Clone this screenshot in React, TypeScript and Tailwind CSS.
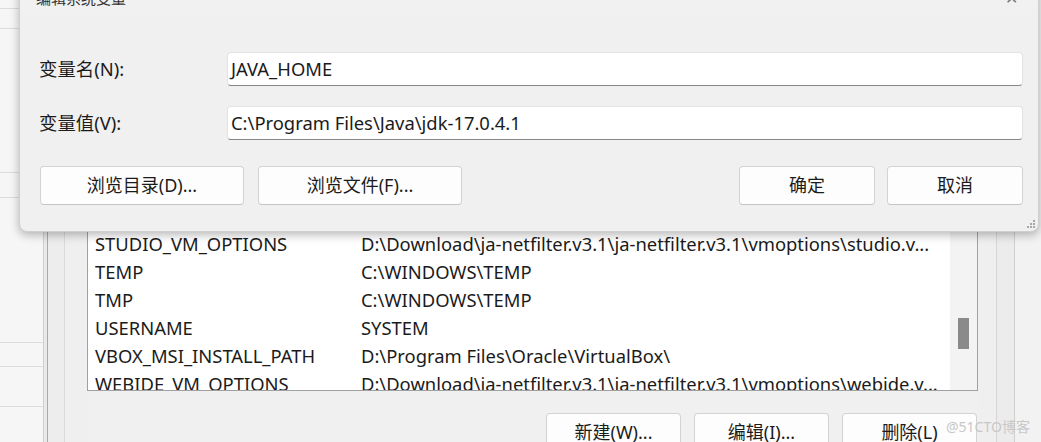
const rows: [string, string][] = [
  ['STUDIO_VM_OPTIONS', 'D:\\Download\\ja-netfilter.v3.1\\ja-netfilter.v3.1\\vmoptions\\studio.v...'],
  ['TEMP', 'C:\\WINDOWS\\TEMP'],
  ['TMP', 'C:\\WINDOWS\\TEMP'],
  ['USERNAME', 'SYSTEM'],
  ['VBOX_MSI_INSTALL_PATH', 'D:\\Program Files\\Oracle\\VirtualBox\\'],
  ['WEBIDE_VM_OPTIONS', 'D:\\Download\\ja-netfilter.v3.1\\ja-netfilter.v3.1\\vmoptions\\webide.v...'],
]

function WinButton({ label, className }: { label: string; className: string }) {
  return (
    <div
      className={`flex h-[39px] shrink-0 items-center justify-center rounded-[4px] border border-[#d3d3d3] border-b-[#c4c4c4] bg-[#fdfdfd] text-[18px] text-[#1b1b1b] ${className}`}
    >
      {label}
    </div>
  )
}

export default function App() {
  return (
    <div className="relative h-[442px] w-[1041px] overflow-hidden bg-[#f0f0f0] font-['Noto_Sans','Noto_Sans_CJK_SC',sans-serif] text-[#1b1b1b]">
      {/* parent window behind */}
      <div className="flex h-full">
        <div className="flex w-[43px] shrink-0 flex-col bg-[#f6f6f6]">
          <div className="h-[9px] border-b border-[#dcdcdc]" />
          <div className="h-[20px] border-b border-[#dcdcdc]" />
          <div className="h-[144px] border-b border-[#dcdcdc]" />
          <div className="h-[25px] border-b border-[#dcdcdc]" />
          <div className="h-[145px] border-b border-[#dcdcdc]" />
          <div className="h-[24px] border-b border-[#dcdcdc]" />
          <div className="h-[40px] border-b border-[#dcdcdc]" />
        </div>
        <div className="w-[5px] shrink-0 border-l border-r border-l-[#cfcfcf] border-r-[#a9a9a9] bg-[#e9e9e9]" />
        <div className="flex w-[39px] shrink-0">
          <div className="w-[17px] border-r border-[#dadada] bg-[#ededed]" />
          <div className="flex-1 bg-[#efefef]" />
        </div>

        <div className="flex w-[891px] shrink-0 flex-col">
          <div className="flex h-[391px] border border-[#a0a0a0] bg-white">
            <div className="flex-1 overflow-hidden pl-[7px] pt-[229px] text-[18.4px]">
              {rows.map(([name, value]) => (
                <div key={name} className="flex h-[28px] items-center whitespace-nowrap">
                  <div className="w-[266px] shrink-0">{name}</div>
                  <div>{value}</div>
                </div>
              ))}
            </div>
            <div className="w-[27px] shrink-0 bg-[#f3f3f3]">
              <div className="mx-auto mt-[317px] h-[31px] w-[11px] bg-[#8a8a8a]" />
            </div>
          </div>
          <div className="mt-[22px] flex justify-end gap-[13px] pr-[1px]">
            <WinButton label="新建(W)..." className="w-[135px]" />
            <WinButton label="编辑(I)..." className="w-[135px]" />
            <WinButton label="删除(L)" className="w-[135px]" />
          </div>
        </div>

        <div className="flex flex-1">
          <div className="w-[19px] border-r border-[#d6d6d6] bg-[#efefef]" />
          <div className="w-[18px] border-r border-[#cfcfcf] bg-[#ececec]" />
          <div className="flex-1 bg-[#f2f2f2]" />
        </div>
      </div>

      {/* edit dialog on top */}
      <div className="absolute left-[19px] top-[-34px] flex h-[266px] w-[1020px] flex-col rounded-b-[8px] border border-[#cfcfcf] bg-[#f0f0f0] shadow-[0_3px_10px_rgba(0,0,0,0.28)]">
        <div className="flex h-[48px] items-start justify-between bg-gradient-to-b from-[#f4f4f4] to-[#f0f0f0] pl-[16px] pr-[20px] pt-[20px]">
          <span className="text-[15px] leading-[22px] text-[#333]">编辑系统变量</span>
          <span className="text-[16px] leading-[22px] text-[#777]">✕</span>
        </div>
        <div className="flex flex-col gap-[20px] pl-[19px] pr-[15px] pt-[37px]">
          <div className="flex items-center">
            <div className="w-[188px] shrink-0 text-[18.4px]">变量名(N):</div>
            <div className="flex h-[34px] flex-1 items-center rounded-[4px] border border-[#e3e3e3] border-b-[#868686] bg-white pl-[3px] text-[18.4px]">
              JAVA_HOME
            </div>
          </div>
          <div className="flex items-center">
            <div className="w-[188px] shrink-0 text-[18.4px]">变量值(V):</div>
            <div className="flex h-[34px] flex-1 items-center rounded-[4px] border border-[#e3e3e3] border-b-[#868686] bg-white pl-[3px] text-[18.4px]">
              C:\Program Files\Java\jdk-17.0.4.1
            </div>
          </div>
        </div>
        <div className="flex pl-[20px] pr-[15px] pt-[26px]">
          <WinButton label="浏览目录(D)..." className="w-[204px]" />
          <WinButton label="浏览文件(F)..." className="ml-[14px] w-[204px]" />
          <div className="flex-1" />
          <WinButton label="确定" className="w-[136px]" />
          <WinButton label="取消" className="ml-[12px] w-[136px]" />
        </div>
        <div className="absolute bottom-[3px] right-[3px] grid grid-cols-3 gap-[1px]">
          <span className="col-start-3 h-[2px] w-[2px] bg-[#a8a8a8]" />
          <span className="col-start-2 h-[2px] w-[2px] bg-[#a8a8a8]" />
          <span className="h-[2px] w-[2px] bg-[#a8a8a8]" />
          <span className="col-start-1 h-[2px] w-[2px] bg-[#a8a8a8]" />
          <span className="h-[2px] w-[2px] bg-[#a8a8a8]" />
          <span className="h-[2px] w-[2px] bg-[#a8a8a8]" />
        </div>
      </div>

      <div className="absolute left-[946px] top-[416px] text-[14px] text-[#c8c8c8]">@51CTO博客</div>
    </div>
  )
}
